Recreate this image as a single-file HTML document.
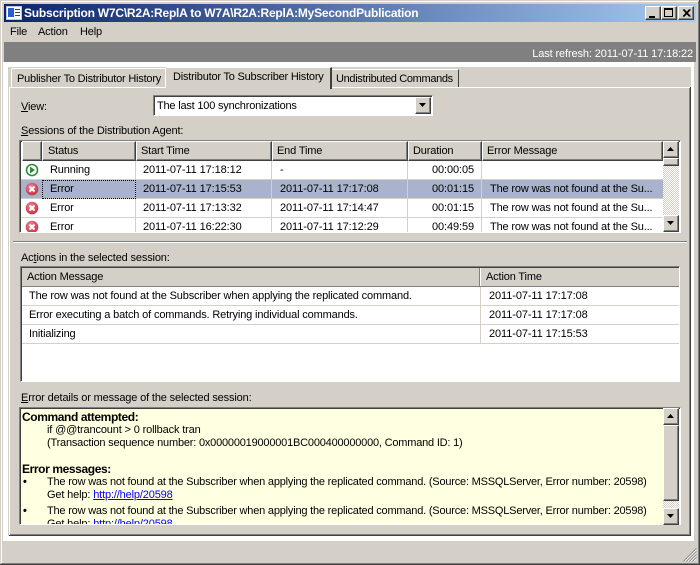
<!DOCTYPE html>
<html><head><meta charset="utf-8"><style>
html,body{margin:0;padding:0;background:#d4d0c8}
#w{position:relative;width:700px;height:565px;overflow:hidden;background:#d4d0c8;font:11px/14px "Liberation Sans",sans-serif;letter-spacing:-.15px;color:#000}
#w div,#w span.a,#w svg{position:absolute}
.t{white-space:nowrap}
.d{letter-spacing:-.1px}
.l{letter-spacing:-.2px}
.h{background:#d4d0c8;border-top:1px solid #fff;border-left:1px solid #fff;border-right:1px solid #404040;border-bottom:1px solid #404040;box-shadow:inset -1px -1px 0 #808080;box-sizing:border-box;height:20px;top:141px}
.hl{height:1px;background:#d4d0c8}
.vl{width:1px;background:#d4d0c8}
.btn{background:#d4d0c8;border-top:1px solid #fff;border-left:1px solid #fff;border-right:1px solid #404040;border-bottom:1px solid #404040;box-shadow:inset -1px -1px 0 #808080;box-sizing:border-box}
.sunk{box-sizing:border-box;border-top:1px solid #808080;border-left:1px solid #808080;border-right:1px solid #fff;border-bottom:1px solid #fff;box-shadow:inset 1px 1px 0 #404040}
u{text-decoration:underline}
</style></head><body><div id="w">
<svg width="0" height="0" style="left:0;top:0"><defs><radialGradient id="er" cx=".4" cy=".35" r=".7"><stop offset="0" stop-color="#ee8a94"/><stop offset="1" stop-color="#c42c40"/></radialGradient></defs></svg>
<!-- frame -->
<div style="left:0;top:0;width:700px;height:1px;background:#d4d0c8"></div>
<div style="left:1px;top:1px;width:698px;height:1px;background:#fff"></div>
<div style="left:1px;top:1px;width:1px;height:563px;background:#fff"></div>
<div style="left:699px;top:0;width:1px;height:565px;background:#404040"></div>
<div style="left:698px;top:1px;width:1px;height:563px;background:#808080"></div>
<div style="left:0;top:564px;width:700px;height:1px;background:#404040"></div>
<div style="left:1px;top:563px;width:698px;height:1px;background:#808080"></div>
<!-- title -->
<div style="left:4px;top:4px;width:692px;height:18px;background:linear-gradient(90deg,#0a246a,#a6caf0)"></div>
<svg style="left:6px;top:5px" width="16" height="16" viewBox="0 0 16 16"><rect x="0.5" y="1.5" width="15" height="13" fill="#fff" stroke="#c0c8d8"/><rect x="2" y="3" width="6" height="9" fill="#2a5fd0"/><rect x="9" y="4" width="5" height="1" fill="#345"/><rect x="9" y="7" width="5" height="1" fill="#345"/><rect x="9" y="10" width="5" height="1" fill="#345"/></svg>
<div class="t" style="left:24px;top:6px;color:#fff;font-weight:bold;font-size:12px;letter-spacing:-.22px">Subscription W7C\R2A:ReplA to W7A\R2A:ReplA:MySecondPublication</div>
<div class="btn" style="left:645px;top:6px;width:16px;height:14px"><div style="left:3px;top:9px;width:6px;height:2px;background:#000"></div></div>
<div class="btn" style="left:661px;top:6px;width:16px;height:14px"><div style="left:2px;top:1px;width:9px;height:9px;border:1px solid #000;border-top-width:2px;box-sizing:border-box"></div></div>
<div class="btn" style="left:678px;top:6px;width:16px;height:14px"><svg style="left:3px;top:2px" width="9" height="8" viewBox="0 0 9 8"><path d="M1 0.5L7.5 7.5M2 0.5L8.5 7.5M7.5 0.5L1 7.5M8.5 0.5L2 7.5" stroke="#000" stroke-width="1"/></svg></div>
<!-- menu -->
<div class="t" style="left:10px;top:25px">File</div>
<div class="t" style="left:38px;top:25px">Action</div>
<div class="t" style="left:80px;top:25px">Help</div>
<!-- gray bar -->
<div style="left:4px;top:42px;width:692px;height:20px;background:#808080"></div>
<div class="t" style="right:7px;top:47px;color:#fff;letter-spacing:-.12px">Last refresh: 2011-07-11 17:18:22</div>
<!-- tab surround -->
<div style="left:3px;top:62px;width:691px;height:479px;background:#fff"></div>
<div style="left:8px;top:67px;width:683px;height:469px;background:#d4d0c8"></div>
<!-- panel -->
<div style="left:10px;top:87px;width:681px;height:1px;background:#fff"></div>
<div style="left:9px;top:87px;width:1px;height:448px;background:#fff"></div>
<div style="left:690px;top:87px;width:1px;height:449px;background:#404040"></div>
<div style="left:689px;top:88px;width:1px;height:447px;background:#808080"></div>
<div style="left:9px;top:535px;width:682px;height:1px;background:#404040"></div>
<div style="left:10px;top:534px;width:680px;height:1px;background:#808080"></div>
<!-- tabs -->
<div style="left:11px;top:68px;width:155px;height:19px;box-sizing:border-box;border-top:1px solid #fff;border-left:1px solid #fff;border-right:1px solid #fff;border-top-left-radius:2px"></div>
<div class="t" style="left:17px;top:72px;letter-spacing:-.21px">Publisher To Distributor History</div>
<div style="left:166px;top:67px;width:166px;height:22px;background:#d4d0c8;box-sizing:border-box;border-top:1px solid #fff;border-right:2px solid #404040"></div>
<div class="t" style="left:173px;top:70px;letter-spacing:-.21px">Distributor To Subscriber History</div>
<div style="left:332px;top:69px;width:127px;height:18px;box-sizing:border-box;border-top:1px solid #fff;border-right:1px solid #404040"></div>
<div class="t" style="left:336px;top:72px;letter-spacing:-.33px">Undistributed Commands</div>
<!-- view -->
<div class="t" style="left:21px;top:100px"><u>V</u>iew:</div>
<div class="sunk" style="left:153px;top:95px;width:280px;height:21px;background:#fff"></div>
<div class="t" style="left:157px;top:99px;letter-spacing:-.2px">The last 100 synchronizations</div>
<div class="btn" style="left:415px;top:97px;width:16px;height:17px"><svg style="left:3px;top:5px" width="8" height="5"><path d="M0 0H7L3.5 4Z" fill="#000"/></svg></div>
<!-- sessions -->
<div class="t" style="left:21px;top:124px"><u>S</u>essions of the Distribution Agent:</div>
<div class="sunk" style="left:19px;top:140px;width:662px;height:93px;background:#fff"></div>
<div style="left:21px;top:161px;width:642px;height:71px;overflow:hidden;background:#fff">
 <div style="left:0;top:19px;width:642px;height:19px;background:#a9b3cd"></div>
 <div class="hl" style="left:0;top:18px;width:642px"></div>
 <div class="hl" style="left:0;top:37px;width:642px"></div>
 <div class="hl" style="left:0;top:56px;width:642px"></div>
 <div class="vl" style="left:114px;top:0;height:71px"></div>
 <div class="vl" style="left:250px;top:0;height:71px"></div>
 <div class="vl" style="left:386px;top:0;height:71px"></div>
 <div class="vl" style="left:460px;top:0;height:71px"></div>
 <div style="left:21px;top:19px;width:94px;height:19px;box-sizing:border-box;border:1px dotted #000"></div>
 <svg style="left:4px;top:2px" width="14" height="14" viewBox="0 0 14 14"><circle cx="7" cy="7" r="5.5" fill="#fff" stroke="#2e8b3d" stroke-width="1.6"/><path d="M5 3.5L10 7L5 10.5Z" fill="#2e8b3d"/></svg>
 <svg style="left:4px;top:21px" width="14" height="14" viewBox="0 0 14 14"><circle cx="7" cy="7" r="6.3" fill="url(#er)"/><path d="M4.5 4.5L9.5 9.5M9.5 4.5L4.5 9.5" stroke="#fff" stroke-width="2"/></svg>
 <svg style="left:4px;top:40px" width="14" height="14" viewBox="0 0 14 14"><circle cx="7" cy="7" r="6.3" fill="url(#er)"/><path d="M4.5 4.5L9.5 9.5M9.5 4.5L4.5 9.5" stroke="#fff" stroke-width="2"/></svg>
 <svg style="left:4px;top:59px" width="14" height="14" viewBox="0 0 14 14"><circle cx="7" cy="7" r="6.3" fill="url(#er)"/><path d="M4.5 4.5L9.5 9.5M9.5 4.5L4.5 9.5" stroke="#fff" stroke-width="2"/></svg>
 <div class="t" style="left:29px;top:2px">Running</div><div class="t d" style="left:122px;top:2px">2011-07-11 17:18:12</div><div class="t" style="left:259px;top:2px">-</div><div class="t d" style="right:189px;top:2px">00:00:05</div>
 <div class="t" style="left:29px;top:21px">Error</div><div class="t d" style="left:122px;top:21px">2011-07-11 17:15:53</div><div class="t d" style="left:259px;top:21px">2011-07-11 17:17:08</div><div class="t d" style="right:189px;top:21px">00:01:15</div><div class="t" style="left:469px;top:21px">The row was not found at the Su...</div>
 <div class="t" style="left:29px;top:40px">Error</div><div class="t d" style="left:122px;top:40px">2011-07-11 17:13:32</div><div class="t d" style="left:259px;top:40px">2011-07-11 17:14:47</div><div class="t d" style="right:189px;top:40px">00:01:15</div><div class="t" style="left:469px;top:40px">The row was not found at the Su...</div>
 <div class="t" style="left:29px;top:59px">Error</div><div class="t d" style="left:122px;top:59px">2011-07-11 16:22:30</div><div class="t d" style="left:259px;top:59px">2011-07-11 17:12:29</div><div class="t d" style="right:189px;top:59px">00:49:59</div><div class="t" style="left:469px;top:59px">The row was not found at the Su...</div>
</div>
<div class="h" style="left:22px;width:20px"></div>
<div class="h" style="left:42px;width:94px"></div>
<div class="h" style="left:136px;width:136px"></div>
<div class="h" style="left:272px;width:136px"></div>
<div class="h" style="left:408px;width:74px"></div>
<div class="h" style="left:482px;width:181px"></div>
<div class="t" style="left:48px;top:144px">Status</div>
<div class="t" style="left:141px;top:144px">Start Time</div>
<div class="t" style="left:277px;top:144px">End Time</div>
<div class="t" style="left:413px;top:144px">Duration</div>
<div class="t" style="left:487px;top:144px">Error Message</div>
<!-- scrollbar 1 -->
<div style="left:663px;top:141px;width:16px;height:91px;background:repeating-conic-gradient(#d4d0c8 0 25%,#fff 0 50%) 0 0/2px 2px"></div>
<div class="btn" style="left:663px;top:141px;width:16px;height:17px"><svg style="left:3px;top:5px" width="8" height="5"><path d="M0 4H7L3.5 0Z" fill="#000"/></svg></div>
<div class="btn" style="left:663px;top:158px;width:16px;height:8px"></div>
<div class="btn" style="left:663px;top:215px;width:16px;height:17px"><svg style="left:3px;top:5px" width="8" height="5"><path d="M0 0H7L3.5 4Z" fill="#000"/></svg></div>
<!-- splitter -->
<div style="left:13px;top:241px;width:674px;height:1px;background:#808080"></div>
<div style="left:13px;top:242px;width:674px;height:1px;background:#fff"></div>
<!-- actions -->
<div class="t" style="left:21px;top:251px">Ac<u>t</u>ions in the selected session:</div>
<div class="sunk" style="left:20px;top:266px;width:660px;height:116px;background:#fff"></div>
<div style="left:22px;top:268px;width:657px;height:19px;background:#d4d0c8;box-sizing:border-box;border-bottom:1px solid #808080"></div>
<div style="left:479px;top:268px;width:1px;height:18px;background:#808080"></div>
<div style="left:480px;top:268px;width:1px;height:18px;background:#fff"></div>
<div class="t" style="left:27px;top:270px">Action Message</div>
<div class="t" style="left:486px;top:270px">Action Time</div>
<div class="hl" style="left:22px;top:305px;width:657px"></div>
<div class="hl" style="left:22px;top:324px;width:657px"></div>
<div class="hl" style="left:22px;top:343px;width:657px"></div>
<div class="vl" style="left:480px;top:287px;height:57px"></div>
<div class="t" style="left:29px;top:289px">The row was not found at the Subscriber when applying the replicated command.</div>
<div class="t d" style="left:489px;top:289px">2011-07-11 17:17:08</div>
<div class="t" style="left:29px;top:308px">Error executing a batch of commands. Retrying individual commands.</div>
<div class="t d" style="left:489px;top:308px">2011-07-11 17:17:08</div>
<div class="t" style="left:29px;top:327px">Initializing</div>
<div class="t d" style="left:489px;top:327px">2011-07-11 17:15:53</div>
<!-- details -->
<div class="t" style="left:21px;top:391px"><u>E</u>rror details or message of the selected session:</div>
<div class="sunk" style="left:19px;top:407px;width:662px;height:118px;background:#ffffe1"></div>
<div style="left:21px;top:409px;width:642px;height:115px;overflow:hidden">
 <div class="t" style="left:1px;top:1px;font-weight:bold;font-size:12px;letter-spacing:-.39px">Command attempted:</div>
 <div class="t" style="left:26px;top:14px">if @@trancount &gt; 0 rollback tran</div>
 <div class="t l" style="left:26px;top:27px">(Transaction sequence number: 0x00000019000001BC000400000000, Command ID: 1)</div>
 <div class="t" style="left:1px;top:53px;font-weight:bold;font-size:12px;letter-spacing:-.39px">Error messages:</div>
 <div class="t" style="left:2px;top:66px;font-weight:bold">•</div>
 <div class="t l" style="left:26px;top:66px">The row was not found at the Subscriber when applying the replicated command. (Source: MSSQLServer, Error number: 20598)</div>
 <div class="t" style="left:26px;top:79px">Get help: <span style="color:#00f;text-decoration:underline">http://help/20598</span></div>
 <div class="t" style="left:2px;top:95px;font-weight:bold">•</div>
 <div class="t l" style="left:26px;top:95px">The row was not found at the Subscriber when applying the replicated command. (Source: MSSQLServer, Error number: 20598)</div>
 <div class="t" style="left:26px;top:108px">Get help: <span style="color:#00f;text-decoration:underline">http://help/20598</span></div>
</div>
<div style="left:663px;top:408px;width:16px;height:116px;background:repeating-conic-gradient(#d4d0c8 0 25%,#fff 0 50%) 0 0/2px 2px"></div>
<div class="btn" style="left:663px;top:408px;width:16px;height:17px"><svg style="left:3px;top:5px" width="8" height="5"><path d="M0 4H7L3.5 0Z" fill="#000"/></svg></div>
<div class="btn" style="left:663px;top:425px;width:16px;height:76px"></div>
<div class="btn" style="left:663px;top:508px;width:16px;height:17px"><svg style="left:3px;top:5px" width="8" height="5"><path d="M0 0H7L3.5 4Z" fill="#000"/></svg></div>
<!-- grip -->
<svg style="left:683px;top:548px" width="14" height="14" viewBox="0 0 14 14"><path d="M13.5 .5L.5 13.5M13.5 3.5L3.5 13.5M13.5 6.5L6.5 13.5M13.5 9.5L9.5 13.5" stroke="#808080" stroke-width="1.2" fill="none"/><path d="M13.5 1.5L1.5 13.5M13.5 4.5L4.5 13.5M13.5 7.5L7.5 13.5M13.5 10.5L10.5 13.5" stroke="#fff" stroke-width=".8" fill="none"/></svg>
</div></body></html>
